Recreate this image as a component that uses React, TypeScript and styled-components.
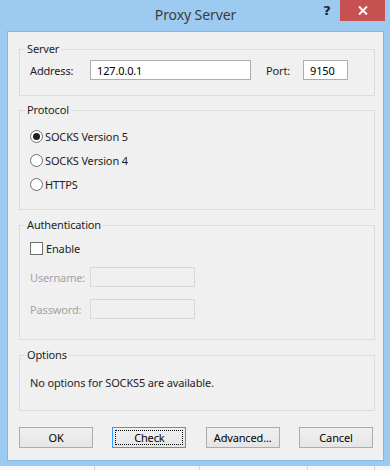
import React, { useState } from 'react';
import styled, { createGlobalStyle } from 'styled-components';

const GlobalStyle = createGlobalStyle`
  html, body {
    margin: 0;
    padding: 0;
    background: #f3f3f3;
  }
  body {
    font-family: 'Noto Sans', 'Open Sans', sans-serif;
    font-size: 11px;
    letter-spacing: -0.15px;
  }
`;

const Page = styled.div`
  width: 390px;
  height: 470px;
  display: flex;
  flex-direction: column;
  overflow: hidden;
`;

const Window = styled.div`
  height: 466px;
  background: #9ccaf0;
  display: flex;
  flex-direction: column;
  padding: 0 6px 0 7px;
  box-sizing: border-box;
`;

const TitleBar = styled.div`
  height: 31px;
  display: grid;
  grid-template-columns: 1fr auto 1fr;
  align-items: start;
`;

const Title = styled.div`
  padding-top: 5px;
  font-size: 14px;
  letter-spacing: -0.1px;
  color: #3c3c3c;
  line-height: 20px;
`;

const Caption = styled.div`
  display: flex;
  justify-content: flex-end;
  margin-right: -1px;
`;

const HelpButton = styled.div`
  width: 26px;
  height: 21px;
  display: flex;
  align-items: center;
  justify-content: center;
  font-family: 'DejaVu Sans', sans-serif;
  font-weight: bold;
  font-size: 13px;
  color: #222;
`;

const CloseButton = styled.div`
  width: 45px;
  height: 21px;
  background: #c75050;
  display: flex;
  align-items: center;
  justify-content: center;
`;

const Client = styled.div`
  height: 430px;
  background: #f0f0f0;
  border: 1px solid #85b4e2;
  box-sizing: border-box;
  padding: 0 8px 0 11px;
  display: flex;
  flex-direction: column;
`;

const Group = styled.fieldset<{ $top: number; $bottom: number }>`
  margin: ${p => p.$top}px 0 0 0;
  padding: 0 0 ${p => p.$bottom}px 10px;
  border: 1px solid #dcdcdc;
  min-inline-size: 0;
  display: flex;
  flex-direction: column;
`;

const Legend = styled.legend`
  margin-left: -5px;
  padding: 0 2px;
  line-height: 14px;
  color: #1e1e1e;
`;

const FieldRow = styled.div<{ $mt: number }>`
  display: flex;
  align-items: center;
  height: 20px;
  margin-top: ${p => p.$mt}px;
`;

const Label = styled.span<{ $w: number; $disabled?: boolean }>`
  width: ${p => p.$w}px;
  flex: none;
  color: ${p => (p.$disabled ? '#a3a3a3' : '#1e1e1e')};
`;

const TextBox = styled.input<{ $w: number }>`
  width: ${p => p.$w}px;
  height: 20px;
  box-sizing: border-box;
  border: 1px solid #abadb3;
  background: #fff;
  padding: 0 0 0 6px;
  font: inherit;
  letter-spacing: inherit;
  color: #000;
  outline: none;

  &:disabled {
    border-color: #d9d9d9;
    background: #f0f0f0;
  }
`;

const RadioRow = styled.label<{ $mt: number }>`
  display: flex;
  align-items: center;
  height: 23px;
  margin-top: ${p => p.$mt}px;
  color: #1e1e1e;
`;

const RadioDot = styled.span<{ $on: boolean }>`
  width: 13px;
  height: 13px;
  box-sizing: border-box;
  border-radius: 50%;
  border: 1px solid #707070;
  background: #fff;
  margin-right: 2px;
  display: flex;
  align-items: center;
  justify-content: center;

  &::after {
    content: '';
    width: 7px;
    height: 7px;
    border-radius: 50%;
    background: ${p => (p.$on ? '#1f1f1f' : 'transparent')};
  }
`;

const CheckRow = styled.label`
  display: flex;
  align-items: center;
  height: 17px;
  margin-top: 8px;
  color: #1e1e1e;
`;

const CheckBox = styled.span`
  width: 13px;
  height: 13px;
  box-sizing: border-box;
  border: 1px solid #707070;
  background: #fff;
  margin-right: 3px;
`;

const Note = styled.div`
  line-height: 15px;
  margin-top: 13px;
  color: #1e1e1e;
`;

const ButtonBar = styled.div`
  display: flex;
  justify-content: space-between;
  margin-top: 16px;
  padding-right: 2px;
`;

const Button = styled.button<{ $focused?: boolean }>`
  width: 74px;
  height: 21px;
  box-sizing: border-box;
  border: 1px solid ${p => (p.$focused ? '#3399ff' : '#acacac')};
  background: linear-gradient(#f0f0f0, #e5e5e5);
  font: inherit;
  letter-spacing: inherit;
  color: #000;
  padding: 0;
  position: relative;

  &::after {
    content: '';
    display: ${p => (p.$focused ? 'block' : 'none')};
    position: absolute;
    inset: 2px;
    border: 1px dotted #000;
  }
`;

const Strip = styled.div`
  height: 4px;
  background: #f7f7f7;
  display: grid;
  grid-template-columns: 95px 105px 108px 67px 1fr;
`;

const StripCell = styled.div`
  border-right: 1px solid #d5d5d5;
`;

const protocols = ['SOCKS Version 5', 'SOCKS Version 4', 'HTTPS'];

export default function App() {
  const [protocol, setProtocol] = useState(0);

  return (
    <>
      <GlobalStyle />
      <Page>
        <Window>
          <TitleBar>
            <div />
            <Title>Proxy Server</Title>
            <Caption>
              <HelpButton>?</HelpButton>
              <CloseButton>
                <svg width="10" height="9" viewBox="0 0 10 9">
                  <path d="M1 0.5 L9 8.5 M9 0.5 L1 8.5" stroke="#fff" strokeWidth="2" />
                </svg>
              </CloseButton>
            </Caption>
          </TitleBar>

          <Client>
            <Group $top={10} $bottom={15}>
              <Legend>Server</Legend>
              <FieldRow $mt={4}>
                <Label $w={60}>Address:</Label>
                <TextBox $w={161} defaultValue="127.0.0.1" />
                <Label $w={37} style={{ marginLeft: 15 }}>Port:</Label>
                <TextBox $w={45} defaultValue="9150" />
              </FieldRow>
            </Group>

            <Group $top={7} $bottom={13}>
              <Legend>Protocol</Legend>
              {protocols.map((name, i) => (
                <RadioRow key={name} $mt={i === 0 ? 8 : 1} onClick={() => setProtocol(i)}>
                  <RadioDot $on={protocol === i} />
                  {name}
                </RadioRow>
              ))}
            </Group>

            <Group $top={8} $bottom={20}>
              <Legend>Authentication</Legend>
              <CheckRow>
                <CheckBox />
                Enable
              </CheckRow>
              <FieldRow $mt={10}>
                <Label $w={60} $disabled>Username:</Label>
                <TextBox $w={105} disabled />
              </FieldRow>
              <FieldRow $mt={12}>
                <Label $w={60} $disabled>Password:</Label>
                <TextBox $w={105} disabled />
              </FieldRow>
            </Group>

            <Group $top={8} $bottom={20}>
              <Legend>Options</Legend>
              <Note>No options for SOCKS5 are available.</Note>
            </Group>

            <ButtonBar>
              <Button>OK</Button>
              <Button $focused>Check</Button>
              <Button>Advanced...</Button>
              <Button>Cancel</Button>
            </ButtonBar>
          </Client>
        </Window>
        <Strip>
          <StripCell />
          <StripCell />
          <StripCell />
          <StripCell />
          <div />
        </Strip>
      </Page>
    </>
  );
}
